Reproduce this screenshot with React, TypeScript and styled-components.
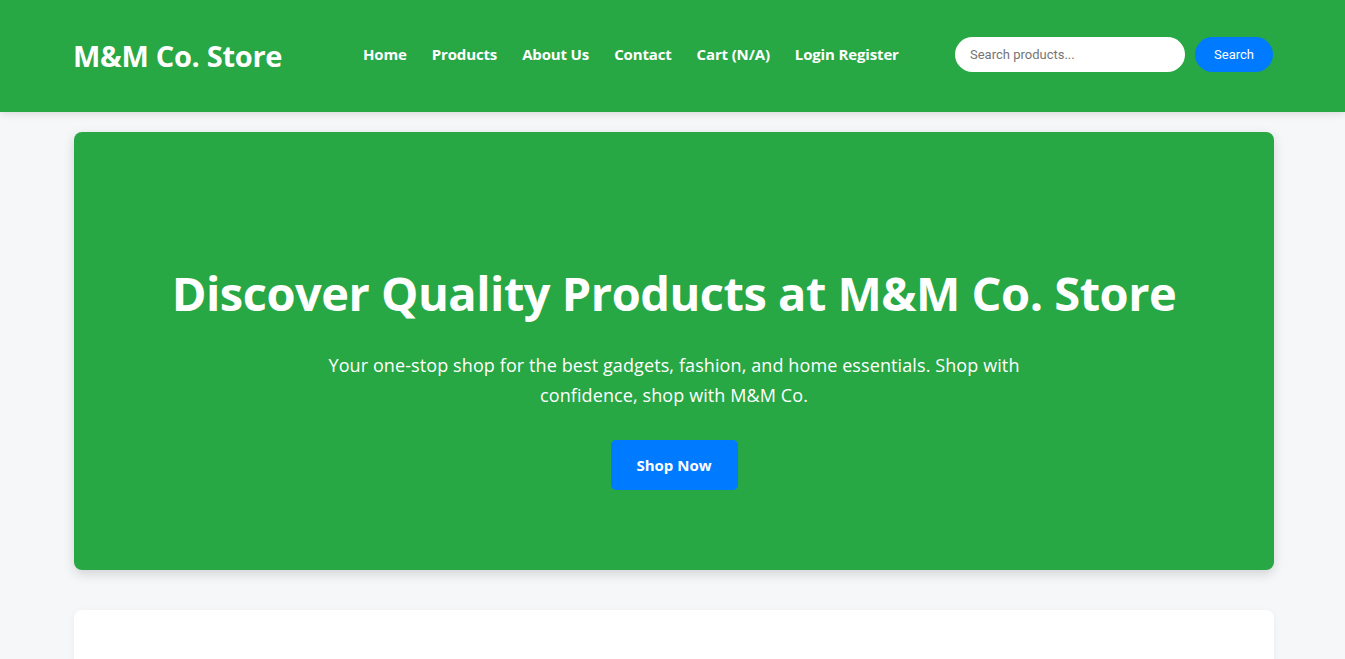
import React from "react";
import styled, { createGlobalStyle } from "styled-components";

const Global = createGlobalStyle`
  * { box-sizing: border-box; }
  html, body { margin: 0; padding: 0; }
  body {
    background: #f6f7f9;
    font-family: "Open Sans", "Noto Sans", sans-serif;
    color: #333;
    overflow: hidden;
  }
`;

const Header = styled.header`
  background: #28a745;
  height: 112px;
  box-shadow: 0 2px 8px rgba(0, 0, 0, 0.12);
  position: relative;
  z-index: 1;
`;

const Container = styled.div`
  width: 1200px;
  margin-left: calc(50% - 598.5px);
`;

const HeaderInner = styled(Container)`
  height: 100%;
  display: flex;
  align-items: center;
  padding-bottom: 4px;
  padding-right: 1px;
`;

const Logo = styled.div`
  color: #fff;
  font-size: 29px;
  font-weight: 700;
  letter-spacing: -0.3px;
  width: 290px;
  margin-top: 2px;
  margin-left: -1px;
`;

const Nav = styled.nav`
  display: flex;
  gap: 25px;
  margin-right: auto;
`;

const NavLink = styled.a`
  color: #fff;
  font-size: 15px;
  font-weight: 700;
  text-decoration: none;
  letter-spacing: -0.15px;
`;

const SearchForm = styled.form`
  display: flex;
  gap: 10px;
  align-items: center;
`;

const SearchInput = styled.input`
  width: 230px;
  height: 35px;
  border: none;
  border-radius: 20px;
  padding: 0 15px;
  font-family: Roboto, "Liberation Sans", sans-serif;
  font-size: 13px;
  outline: none;
  &::placeholder { color: #757575; }
`;

const SearchButton = styled.button`
  width: 78px;
  height: 35px;
  border: none;
  border-radius: 20px;
  background: #007bff;
  color: #fff;
  font-family: Roboto, "Liberation Sans", sans-serif;
  font-size: 13px;
`;

const Main = styled(Container)`
  padding-top: 20px;
  display: flex;
  flex-direction: column;
  gap: 40px;
`;

const Hero = styled.section`
  background: #28a745;
  border-radius: 8px;
  height: 438px;
  box-shadow: 0 4px 12px rgba(0, 0, 0, 0.15);
  display: flex;
  flex-direction: column;
  align-items: center;
  text-align: center;
  color: #fff;
  padding-top: 133px;
`;

const HeroTitle = styled.h1`
  margin: 0 0 29px;
  font-size: 47px;
  font-weight: 700;
  letter-spacing: -0.5px;
  line-height: 56px;
`;

const HeroText = styled.p`
  margin: 0 0 30px;
  max-width: 710px;
  font-size: 18px;
  line-height: 30px;
  letter-spacing: 0.1px;
`;

const ShopButton = styled.a`
  display: inline-flex;
  align-items: center;
  justify-content: center;
  width: 127px;
  height: 50px;
  background: #007bff;
  border-radius: 5px;
  color: #fff;
  font-weight: 700;
  font-size: 15px;
  text-decoration: none;
`;

const Card = styled.section`
  background: #fff;
  border-radius: 8px;
  height: 200px;
  box-shadow: 0 2px 8px rgba(0, 0, 0, 0.05);
`;

export default function App() {
  const links = ["Home", "Products", "About Us", "Contact", "Cart (N/A)", "Login Register"];
  return (
    <>
      <Global />
      <Header>
        <HeaderInner>
          <Logo>M&amp;M Co. Store</Logo>
          <Nav>
            {links.map((l) => (
              <NavLink key={l} href="#">{l}</NavLink>
            ))}
          </Nav>
          <SearchForm onSubmit={(e) => e.preventDefault()}>
            <SearchInput placeholder="Search products..." />
            <SearchButton type="submit">Search</SearchButton>
          </SearchForm>
        </HeaderInner>
      </Header>
      <Main>
        <Hero>
          <HeroTitle>Discover Quality Products at M&amp;M Co. Store</HeroTitle>
          <HeroText>
            Your one-stop shop for the best gadgets, fashion, and home essentials. Shop with
            confidence, shop with M&amp;M Co.
          </HeroText>
          <ShopButton href="#">Shop Now</ShopButton>
        </Hero>
        <Card />
      </Main>
    </>
  );
}
